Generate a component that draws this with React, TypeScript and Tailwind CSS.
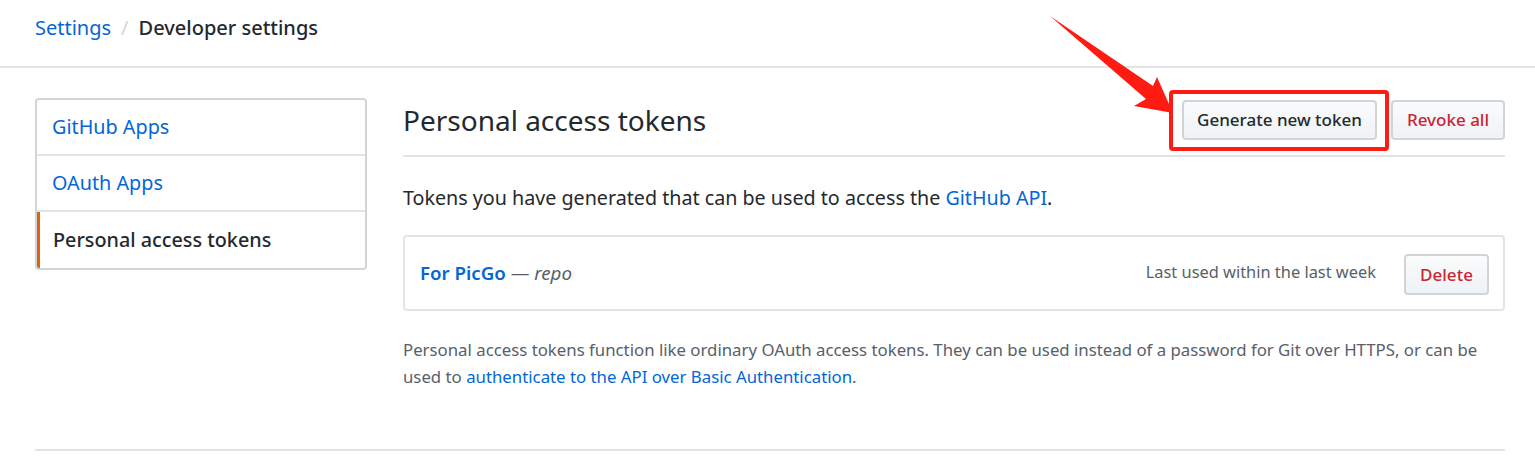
import React from 'react';

const font = { fontFamily: '"Noto Sans", "Open Sans", Arial, sans-serif' };

const SideItem: React.FC<{ label: string; active?: boolean; last?: boolean }> = ({ label, active, last }) => (
  <div
    className={`h-[56px] flex items-center text-[19.8px] ${last ? '' : 'border-b-2 border-[#e1e4e8]'} ${
      active ? 'text-[#24292e] font-medium border-l-[3px] border-l-[#e36209] pl-[13px]' : 'text-[#0366d6] pl-[15px]'
    }`}
  >
    {label}
  </div>
);

const btn =
  'h-[40px] rounded-[4px] border-2 border-[#d1d5da] bg-gradient-to-b from-[#fafbfc] to-[#eff3f6] text-[17px] font-medium';

export default function App() {
  return (
    <div className="relative w-[1535px] h-[469px] bg-white overflow-hidden text-[#24292e]" style={font}>
      <div className="h-[68px] border-b-2 border-[#e1e4e8] px-[35px] pt-[13px] text-[20px]">
        <span className="text-[#0366d6]">Settings</span>
        <span className="text-[#d1d5da] mx-[10px]">/</span>
        <span className="font-medium">Developer settings</span>
      </div>

      <div className="flex pl-[35px] pr-[30px] pt-[30px] gap-[36px]">
        <div className="w-[332px] shrink-0 self-start border-2 border-[#d1d5da] rounded-[4px] overflow-hidden">
          <SideItem label="GitHub Apps" />
          <SideItem label="OAuth Apps" />
          <SideItem label="Personal access tokens" active last />
        </div>

        <div className="flex-1">
          <div className="flex items-start justify-between border-b-2 border-[#e1e4e8] pt-[2px] pb-[15px]">
            <h2 className="h-[40px] flex items-center text-[28px] font-normal">Personal access tokens</h2>
            <div className="flex gap-[14px]">
              <div className="relative">
                <button className={`${btn} w-[195px] text-[#24292e]`}>Generate new token</button>
                <div className="absolute -left-[13px] -top-[10px] w-[220px] h-[61px] border-[4px] border-[#ff1a12] rounded-[4px]" />
              </div>
              <button className={`${btn} w-[114px] text-[#cb2431]`}>Revoke all</button>
            </div>
          </div>

          <p className="mt-[26px] text-[19.7px] leading-[30px]">
            Tokens you have generated that can be used to access the <span className="text-[#0366d6]">GitHub API</span>.
          </p>

          <div className="mt-[22px] h-[76px] border-2 border-[#e1e4e8] rounded-[4px] flex items-center justify-between pl-[15px] pr-[14px]">
            <div className="text-[18.7px]">
              <span className="font-semibold text-[#0366d6]">For PicGo</span>
              <span className="text-[#586069]"> — <em>repo</em></span>
            </div>
            <div className="flex items-center gap-[28px]">
              <span className="text-[16.4px] text-[#586069] -mt-[2px]">Last used within the last week</span>
              <button className={`${btn} w-[85px] h-[41px] mt-[3px] text-[#cb2431]`}>Delete</button>
            </div>
          </div>

          <p className="mt-[25px] text-[16.8px] leading-[27px] text-[#586069]">
            Personal access tokens function like ordinary OAuth access tokens. They can be used instead of a password for Git over HTTPS, or can be used to{' '}
            <span className="text-[#0366d6]">authenticate to the API over Basic Authentication</span>.
          </p>
        </div>
      </div>

      <div className="ml-[35px] mr-[30px] mt-[59px] border-t-2 border-[#e1e4e8]" />

      <svg className="absolute left-0 top-0 pointer-events-none" width="1535" height="469" viewBox="0 0 1535 469">
        <polygon points="1050,16 1153,86 1157,77 1173,113 1134,106 1146,99" fill="#ff1a12" />
      </svg>
    </div>
  );
}
